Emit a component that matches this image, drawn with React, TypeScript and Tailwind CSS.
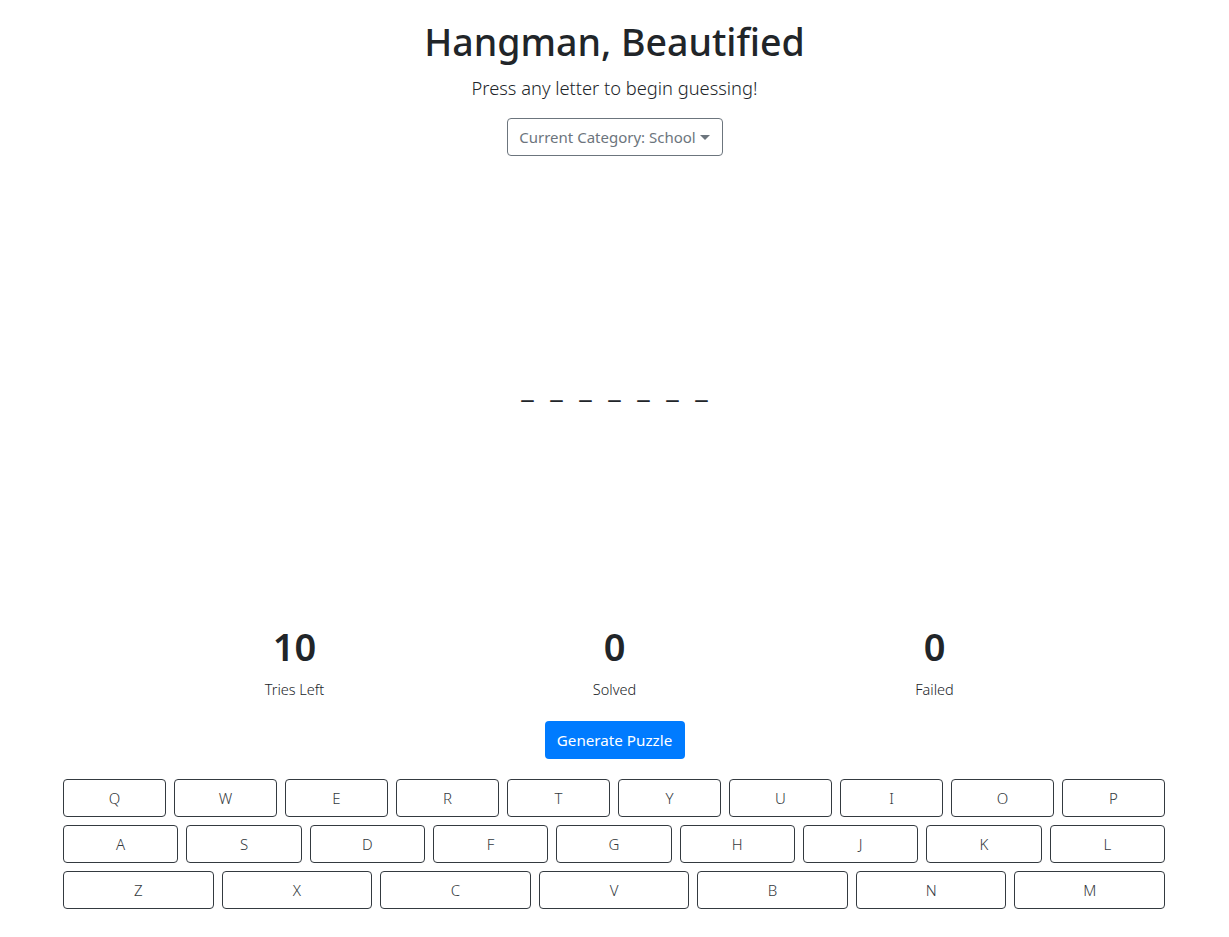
import React from 'react';

const rows = [
  ['Q', 'W', 'E', 'R', 'T', 'Y', 'U', 'I', 'O', 'P'],
  ['A', 'S', 'D', 'F', 'G', 'H', 'J', 'K', 'L'],
  ['Z', 'X', 'C', 'V', 'B', 'N', 'M'],
];

const stats = [
  { value: '10', label: 'Tries Left' },
  { value: '0', label: 'Solved' },
  { value: '0', label: 'Failed' },
];

const App: React.FC = () => {
  const blanks = Array.from({ length: 7 });

  return (
    <div className="min-h-screen bg-white text-[#212529] font-['Noto_Sans',sans-serif] pt-[18px]">
      <div className="flex flex-col items-center">
        <h1 className="text-[37.5px] leading-[48px] font-medium">Hangman, Beautified</h1>
        <p className="mt-[7px] text-[18.3px] leading-[30px] font-light">Press any letter to begin guessing!</p>
        <button className="mt-[15px] h-[38px] w-[216px] justify-center border border-[#6c757d] rounded text-[#6c757d] text-[15px] flex items-center">
          Current Category: School
          <span className="ml-[4px] mt-[1px] border-t-[5px] border-t-[#6c757d] border-x-[5px] border-x-transparent"></span>
        </button>
      </div>

      <div className="h-[466px] flex justify-center pt-[216px]">
        <div className="flex gap-[16px] h-[30px]">
          {blanks.map((_, i) => (
            <span key={i} className="w-[13px] text-[28px] leading-[30px] text-center overflow-visible">
              _
            </span>
          ))}
        </div>
      </div>

      <div className="w-[960px] mx-auto grid grid-cols-3 text-center">
        {stats.map((s, i) => (
          <div key={i}>
            <div className="text-[38px] leading-[48px] font-semibold">{s.value}</div>
            <div className="mt-[7px] text-[14.5px] leading-[24px] font-light">{s.label}</div>
          </div>
        ))}
      </div>

      <div className="flex justify-center mt-[20px]">
        <button className="h-[38px] w-[140px] rounded bg-[#007bff] text-white text-[15.2px]">Generate Puzzle</button>
      </div>

      <div className="w-[1102px] ml-[63px] mt-[20px] flex flex-col gap-2 pb-6">
        {rows.map((row, r) => (
          <div key={r} className="flex gap-2">
            {row.map((k) => (
              <button
                key={k}
                className="flex-1 h-[38px] border border-[#343a40] rounded text-[#343a40] text-[15px] font-light"
              >
                {k}
              </button>
            ))}
          </div>
        ))}
      </div>
    </div>
  );
};

export default App;
